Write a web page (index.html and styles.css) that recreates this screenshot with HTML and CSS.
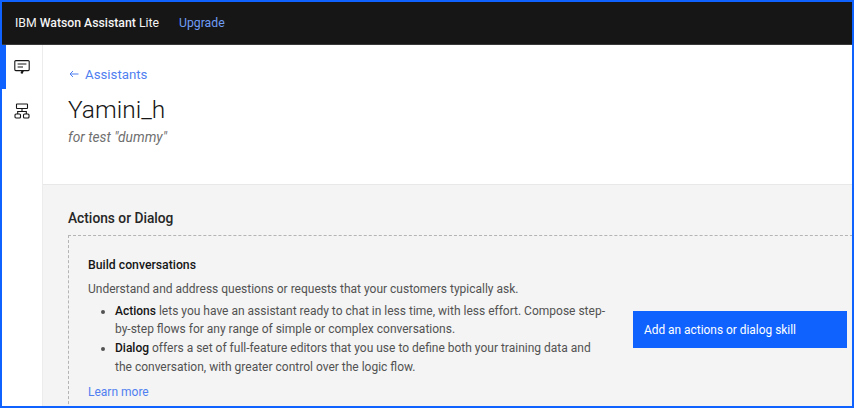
FILE: index.html
```html
<!DOCTYPE html>
<html lang="en">
<head>
    <meta charset="UTF-8">
    <title>Watson Assistant</title>
    <link rel="stylesheet" href="styles.css">
</head>
<body>
    <div class="frame">
        <header class="topbar">
            <span class="brand">IBM <b>Watson Assistant</b> Lite</span>
            <a class="upgrade" href="#">Upgrade</a>
        </header>

        <div class="main">
            <nav class="sidebar">
                <div class="nav-item active">
                    <svg width="16" height="16" viewBox="0 0 16 16" fill="none" stroke="#161616" stroke-width="1.1">
                        <path d="M1.8 1.6h12.4a1 1 0 0 1 1 1v8a1 1 0 0 1-1 1H9.6l-1.5 2.7-.9-.5 1.2-2.2H1.8a1 1 0 0 1-1-1v-8a1 1 0 0 1 1-1z"/>
                        <path d="M3.6 5h8.8M3.6 8h5.4"/>
                    </svg>
                </div>
                <div class="nav-item">
                    <svg width="16" height="16" viewBox="0 0 16 16" fill="none" stroke="#161616" stroke-width="1.1">
                        <rect x="2.5" y="1" width="11" height="4.5" rx=".5"/>
                        <rect x="1" y="11" width="5.5" height="4" rx="1"/>
                        <rect x="9.5" y="11" width="5.5" height="4" rx="1"/>
                        <path d="M8 5.5v3M3.7 11V8.5h8.6V11"/>
                    </svg>
                </div>
            </nav>

            <main class="content">
                <section class="intro">
                    <a class="back" href="#">
                        <svg class="arrow" width="10" height="8" viewBox="0 0 10 8" fill="none" stroke="#4f7ff0">
                            <path d="M9.5 4H1M4 1 1 4l3 3"/>
                        </svg>Assistants</a>
                    <h1>Yamini_h</h1>
                    <p class="subtitle">for test "dummy"</p>
                </section>

                <section class="skills">
                    <h2>Actions or Dialog</h2>
                    <div class="dropzone">
                        <div class="copy">
                            <h3>Build conversations</h3>
                            <p>Understand and address questions or requests that your customers typically ask.</p>
                            <ul>
                                <li><b>Actions</b> lets you have an assistant ready to chat in less time, with less effort. Compose step-by-step flows for any range of simple or complex conversations.</li>
                                <li><b>Dialog</b> offers a set of full-feature editors that you use to define both your training data and the conversation, with greater control over the logic flow.</li>
                            </ul>
                            <a class="learn" href="#">Learn more</a>
                        </div>
                        <button class="add-btn">Add an actions or dialog skill</button>
                    </div>
                </section>
            </main>
        </div>
    </div>
</body>
</html>
```

FILE: styles.css
```css
* {
    box-sizing: border-box;
    font-family: Roboto, "Noto Sans", Arial, sans-serif;
}

html, body {
    margin: 0;
    height: 100%;
    overflow: hidden;
}

.frame {
    height: 408px;
    border: 2px solid #0f62fe;
    display: flex;
    flex-direction: column;
    overflow: hidden;
    background: #fff;
}

.topbar {
    height: 43px;
    flex: none;
    display: flex;
    align-items: center;
    padding-left: 13px;
    background: #161616;
    border-bottom: 1px solid #393939;
}

.brand {
    font-size: 12.25px;
    color: #f4f4f4;
}

.brand b {
    font-weight: 500;
}

.upgrade {
    margin-left: 20px;
    font-size: 12.25px;
    color: #6f9cf5;
    text-decoration: none;
}

.main {
    flex: 1;
    display: flex;
    min-height: 0;
}

.sidebar {
    width: 41px;
    flex: none;
    border-right: 1px solid #ececec;
}

.nav-item {
    height: 44px;
    display: flex;
    align-items: center;
    justify-content: center;
    border-left: 4px solid transparent;
    padding-right: 4px;
}

.nav-item.active {
    border-left-color: #0f62fe;
}

.content {
    flex: 1;
    min-width: 0;
}

.intro {
    height: 140px;
    padding: 22px 25px 0;
    border-bottom: 1px solid #e8e8e8;
}

.back {
    display: block;
    font-size: 13.25px;
    color: #4f7ff0;
    text-decoration: none;
}

.arrow {
    margin: 0 6px 1px 1px;
}

h1 {
    margin: 12px 0 0;
    font-size: 24.5px;
    font-weight: 300;
    line-height: 32px;
    color: #161616;
}

.subtitle {
    margin: 3px 0 0;
    font-size: 13.75px;
    font-style: italic;
    color: #6f6f6f;
}

.skills {
    height: 400px;
    padding: 25px 0 0 25px;
    background: #f4f4f4;
}

h2 {
    margin: 0 0 8px;
    font-size: 13.75px;
    line-height: 17px;
    font-weight: 500;
    color: #262626;
}

.dropzone {
    display: flex;
    align-items: flex-start;
    width: 800px;
    height: 300px;
    padding: 21px 0 0 19px;
    border: 1px dashed #b4b4b4;
}

.copy {
    width: 520px;
    flex: none;
    font-size: 12px;
    line-height: 18.7px;
    color: #525252;
}

h3 {
    margin: 0 0 7px;
    font-size: 12.25px;
    line-height: 16px;
    font-weight: 500;
    color: #161616;
}

.copy p {
    margin: 0 0 3px;
}

.copy ul {
    margin: 0 0 6px;
    padding-left: 27px;
}

.copy li b {
    font-weight: 500;
    color: #161616;
}

.learn {
    color: #4f7ff0;
    text-decoration: none;
}

.add-btn {
    width: 214px;
    height: 37px;
    margin: 54px 0 0 25px;
    flex: none;
    padding: 0 11px;
    text-align: left;
    font-size: 11.9px;
    color: #fff;
    background: #0f62fe;
    border: none;
}
```
